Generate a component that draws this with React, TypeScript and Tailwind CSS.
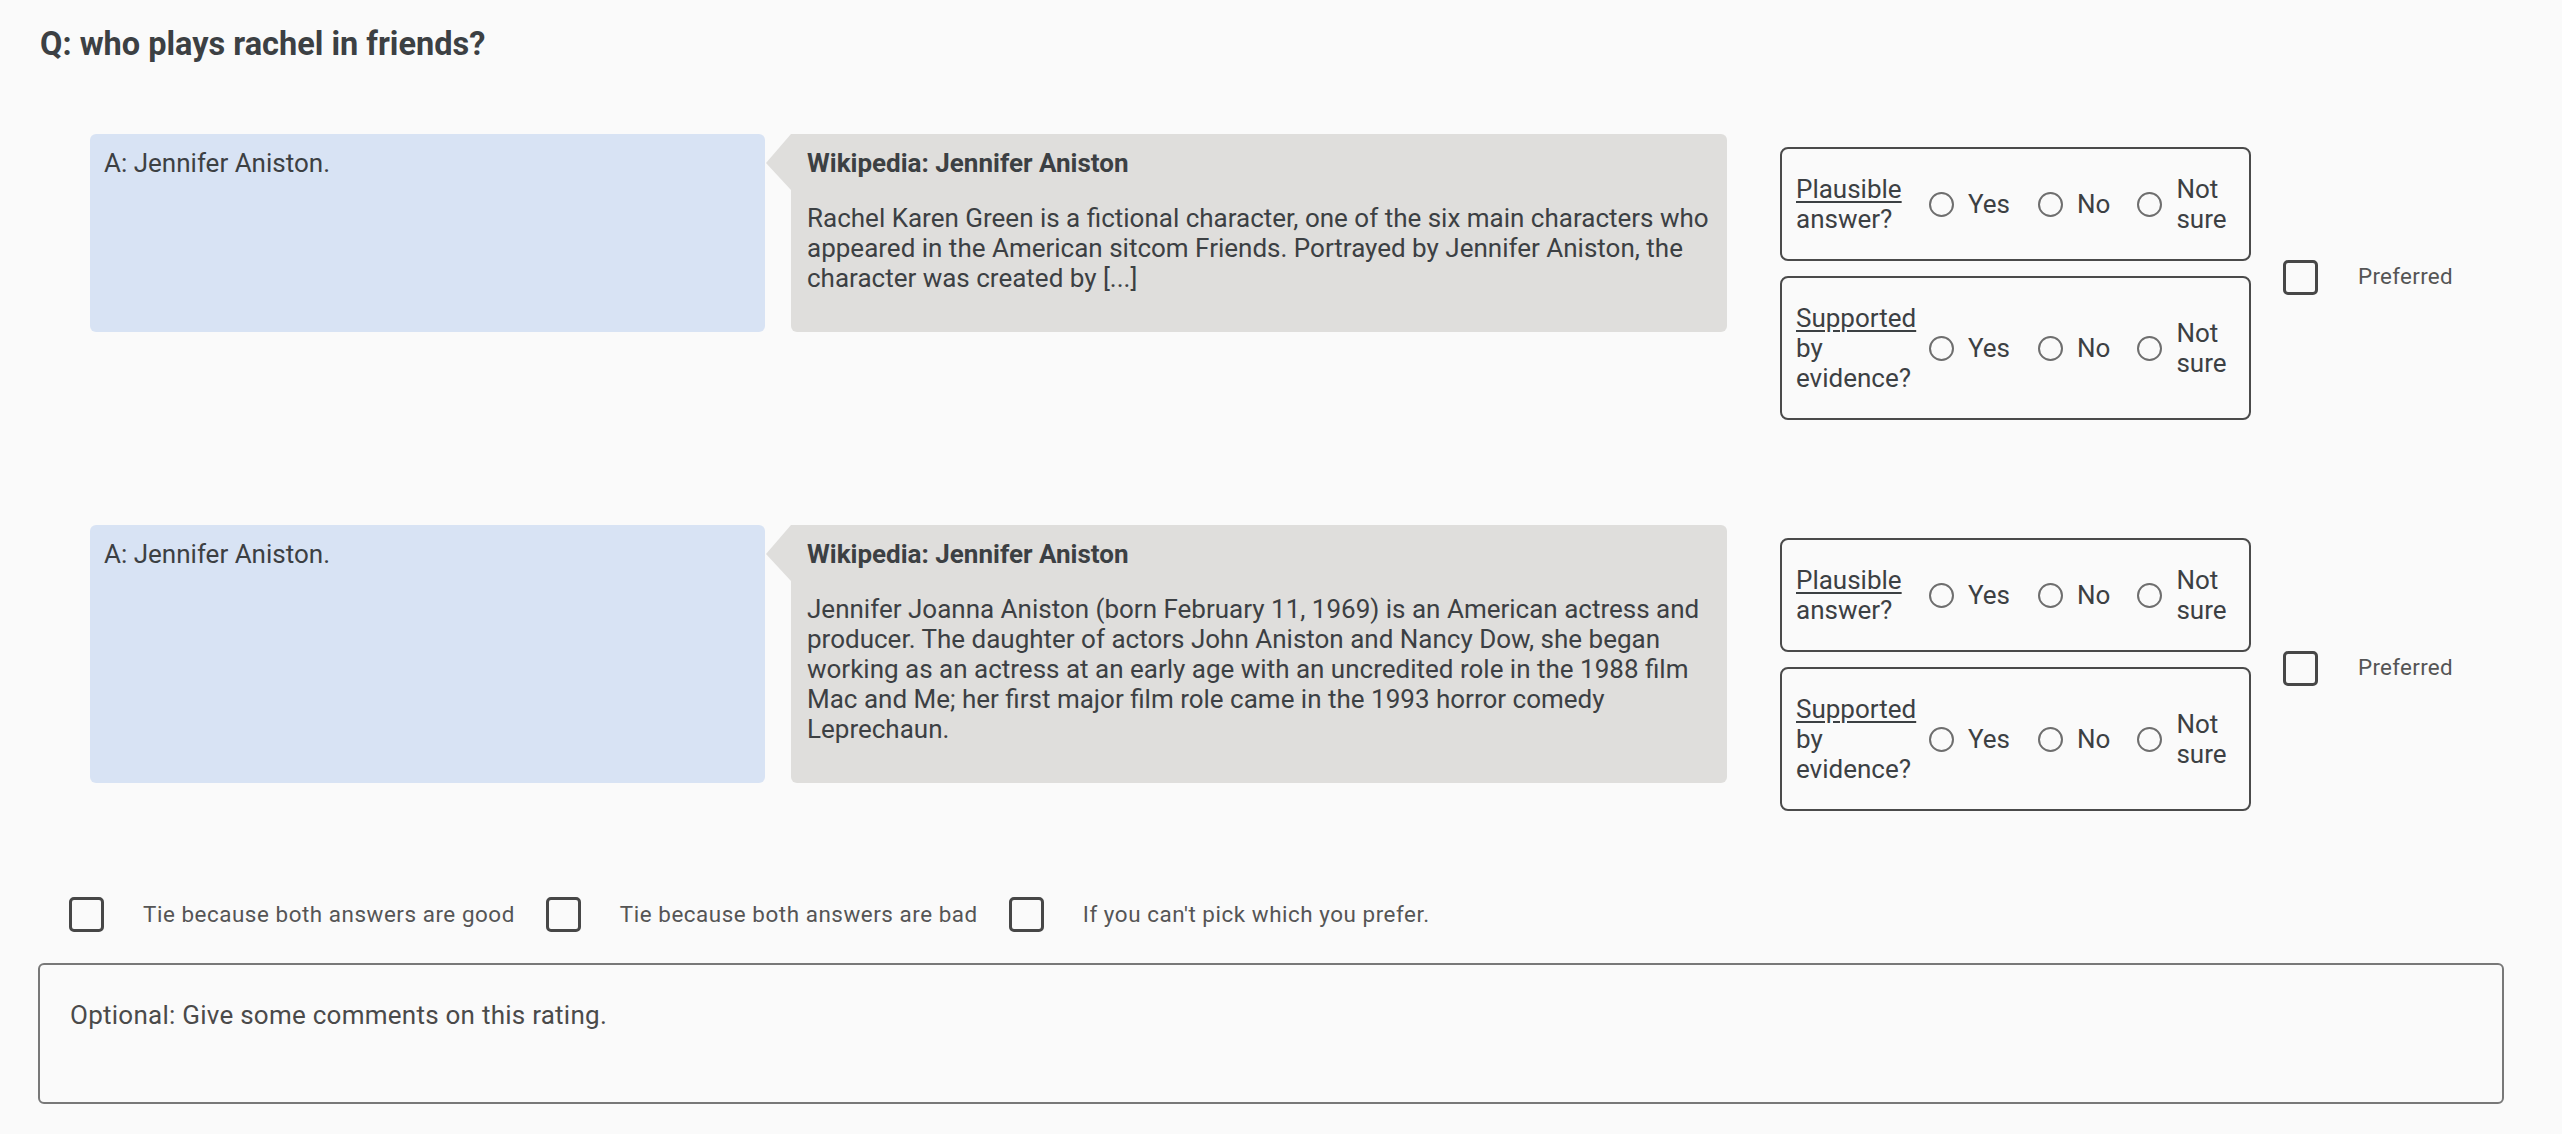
import React from 'react';

type Item = {
  answer: string;
  source: string;
  text: string;
};

const items: Item[] = [
  {
    answer: 'A: Jennifer Aniston.',
    source: 'Wikipedia: Jennifer Aniston',
    text: 'Rachel Karen Green is a fictional character, one of the six main characters who appeared in the American sitcom Friends. Portrayed by Jennifer Aniston, the character was created by [...]',
  },
  {
    answer: 'A: Jennifer Aniston.',
    source: 'Wikipedia: Jennifer Aniston',
    text: 'Jennifer Joanna Aniston (born February 11, 1969) is an American actress and producer. The daughter of actors John Aniston and Nancy Dow, she began working as an actress at an early age with an uncredited role in the 1988 film Mac and Me; her first major film role came in the 1993 horror comedy Leprechaun.',
  },
];

function Radio() {
  return <span className="block h-[25px] w-[25px] shrink-0 rounded-full border-2 border-[#6e6e6e]" />;
}

function Checkbox() {
  return <span className="block h-[35px] w-[35px] shrink-0 rounded-[5px] border-[3.5px] border-[#474747]" />;
}

function RatingBox({ head, rest }: { head: string; rest: string }) {
  return (
    <div className="flex w-[471px] items-center rounded-[8px] border-2 border-[#4a4a4a] px-[14px] py-[25px] text-[26px] leading-[30px]">
      <div className="w-[126px] shrink-0">
        <span className="underline underline-offset-[3px]">{head}</span> {rest}
      </div>
      <span className="ml-[7px] flex">
        <Radio />
      </span>
      <span className="ml-[14px]">Yes</span>
      <span className="ml-[28px] flex">
        <Radio />
      </span>
      <span className="ml-[14px]">No</span>
      <span className="ml-[27px] flex">
        <Radio />
      </span>
      <span className="ml-[14px] min-w-0">Not sure</span>
    </div>
  );
}

function Row({ item }: { item: Item }) {
  return (
    <div className="flex items-start">
      <div className="flex shrink-0">
        <div className="w-[675px] rounded-[6px] bg-[#d8e3f4] px-[14px] pt-[14px] text-[26px] leading-[30px]">
          {item.answer}
        </div>
        <div className="relative ml-[26px] w-[936px] rounded-[6px] rounded-tl-none bg-[#dfdedc] py-[14px] pl-4 pr-3 text-[26px] leading-[30px]">
          <svg className="absolute left-[-25px] top-0" width="25" height="56" viewBox="0 0 25 56">
            <polygon points="25,0 0,29 25,56" fill="#dfdedc" />
          </svg>
          <div className="font-bold">{item.source}</div>
          <p className="my-[25px]">{item.text}</p>
        </div>
      </div>
      <div className="ml-[53px] mt-[13px] flex flex-col gap-[15px]">
        <RatingBox head="Plausible" rest="answer?" />
        <RatingBox head="Supported" rest="by evidence?" />
      </div>
      <div className="ml-[32px] flex items-center self-center">
        <Checkbox />
        <span className="ml-[40px] text-[22.4px] tracking-[0.3px] text-[#555]">Preferred</span>
      </div>
    </div>
  );
}

export default function App() {
  return (
    <div className="min-h-screen bg-[#fafafa] pb-8 font-['Roboto',sans-serif] text-[#3c4043]">
      <div className="pl-[38px] pr-[58px] pt-[25px]">
        <h1 className="pl-[2px] text-[32.5px] font-bold leading-[38px]">Q: who plays rachel in friends?</h1>

        <div className="mt-[71px] pl-[52px]">
          <Row item={items[0]} />
          <div className="mt-[105px]">
            <Row item={items[1]} />
          </div>
        </div>

        <div className="mt-[86px] flex items-center pl-[31px] text-[22.4px] tracking-[0.55px] text-[#555]">
          <Checkbox />
          <span className="ml-[39px]">Tie because both answers are good</span>
          <span className="ml-[31px]"><Checkbox /></span>
          <span className="ml-[39px]">Tie because both answers are bad</span>
          <span className="ml-[31px]"><Checkbox /></span>
          <span className="ml-[39px]">If you can't pick which you prefer.</span>
        </div>

        <textarea
          className="mt-[31px] block h-[141px] w-full resize-none rounded-[6px] border-2 border-[#787878] bg-transparent px-[30px] pt-[35px] text-[26px] leading-[30px] tracking-[0.25px] text-[#3c4043] outline-none placeholder:text-[#4a4a4a]"
          placeholder="Optional: Give some comments on this rating."
        />
      </div>
    </div>
  );
}
